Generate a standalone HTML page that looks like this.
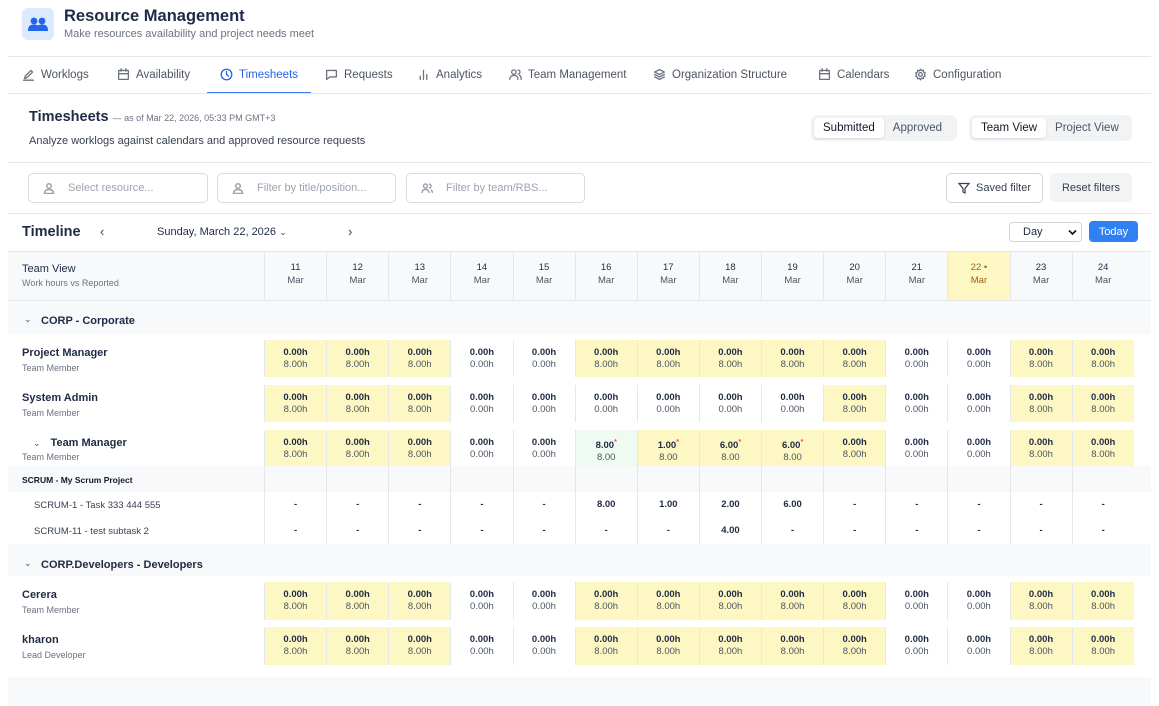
<!DOCTYPE html>
<html><head><meta charset="utf-8"><style>
*{box-sizing:border-box;margin:0;padding:0}
body{width:1159px;height:706px;overflow:hidden;background:#fff;font-family:"Liberation Sans","DejaVu Sans",sans-serif;color:#1f2a44;position:relative}
.a{position:absolute}
.hl{position:absolute;left:8px;width:1143px;height:1px;background:#e5e7eb}
.tab{position:absolute;top:68px;font-size:11.5px;color:#4b5563;display:flex;align-items:center;gap:6px;white-space:nowrap}
.tab svg{width:13px;height:13px;fill:none;stroke:#6b7280;stroke-width:1.6;stroke-linecap:round;stroke-linejoin:round}
.seg{position:absolute;top:115px;height:26px;background:#f1f3f5;border-radius:6px;display:flex;padding:3px;font-size:11.5px;color:#4b5563}
.seg span{padding:0 9px;line-height:20px}
.seg .on{background:#fff;color:#111827;border-radius:4px;box-shadow:0 1px 2px rgba(0,0,0,.12)}
.inp{position:absolute;top:173px;height:30px;border:1px solid #d8dce1;border-radius:5px;font-size:11px;color:#9ca3af;display:flex;align-items:center;padding-left:14px;gap:13px}
.inp svg{width:12px;height:12px;fill:none;stroke:#9ca3af;stroke-width:1.5}
.grid{position:absolute;left:8px;display:grid;grid-template-columns:256px repeat(14,62.14px)}
.grid>i{font-style:normal;text-align:center;font-size:9.5px;color:#4b5563;border-left:1px solid #e5e7eb;line-height:12.5px;padding-top:6.5px}
.grid>i b{display:block;color:#1f2a44;font-weight:bold}
.grid>i.y{background:#fdf7c3}
.grid>i.g{background:#effaf3}
.grid>i sup{color:#ef4444;font-size:7px}
.grid.t>i{padding-top:7px}
.grid.h>i{padding-top:10px}
.lab{padding-left:14px}
.lab .n{font-size:11px;font-weight:bold;color:#1f2a44;margin-top:7px}
.lab .s{font-size:9px;color:#6b7280;margin-top:4px}
.grp{position:absolute;left:8px;width:1143px;background:#f8f9fb}
</style></head><body>
<div class="a" style="left:22px;top:8px;width:32px;height:32px;background:#dbeafe;border-radius:6px"></div>
<svg class="a" style="left:28px;top:16px" width="20" height="16" viewBox="0 0 20 16"><circle cx="6" cy="5" r="3.4" fill="#2563eb"/><circle cx="14" cy="5" r="3.4" fill="#2563eb"/><path d="M0 15c0-5 2-6.5 6-6.5s6 1.5 6 6.5z M8 15c0-5 2-6.5 6-6.5s6 1.5 6 6.5z" fill="#2563eb"/></svg>
<div class="a" style="left:64px;top:7px;font-size:16.5px;font-weight:bold;color:#1e2a46">Resource Management</div>
<div class="a" style="left:64px;top:28px;font-size:11px;color:#6b7280">Make resources availability and project needs meet</div>
<div class="hl" style="top:56px"></div>
<div class="tab" style="left:22px"><svg viewBox="0 0 16 16"><path d="M3 13l1-3 7-7 2 2-7 7z M2 15h12"/></svg>Worklogs</div>
<div class="tab" style="left:117px"><svg viewBox="0 0 16 16"><rect x="2" y="3" width="12" height="11" rx="1"/><path d="M2 7h12M5 1v3M11 1v3"/></svg>Availability</div>
<div class="tab" style="left:220px;color:#2563eb"><svg viewBox="0 0 16 16" style="stroke:#2563eb"><circle cx="8" cy="8" r="6.5"/><path d="M8 4v4l2.5 2"/></svg>Timesheets</div>
<div class="a" style="left:207px;top:92px;width:104px;height:2px;background:#3b7cf0"></div>
<div class="tab" style="left:325px"><svg viewBox="0 0 16 16"><path d="M2 3h12v8H6l-4 3z"/></svg>Requests</div>
<div class="tab" style="left:417px"><svg viewBox="0 0 16 16"><path d="M4 14v-4M8 14V3M12 14V8"/></svg>Analytics</div>
<div class="tab" style="left:509px"><svg viewBox="0 0 16 16"><circle cx="6" cy="5" r="2.7"/><path d="M1 14c0-3 2-5 5-5s5 2 5 5M11 2.5a2.5 2.5 0 010 5M13 9c1.5 1 2 3 2 5"/></svg>Team Management</div>
<div class="tab" style="left:653px"><svg viewBox="0 0 16 16"><path d="M8 2l6 3-6 3-6-3z M2 8l6 3 6-3 M2 11l6 3 6-3"/></svg>Organization Structure</div>
<div class="tab" style="left:818px"><svg viewBox="0 0 16 16"><rect x="2" y="3" width="12" height="11" rx="1"/><path d="M2 7h12M5 1v3M11 1v3"/></svg>Calendars</div>
<div class="tab" style="left:914px"><svg viewBox="0 0 16 16"><circle cx="8" cy="8" r="2.3"/><path d="M8 1.5l1.3 1.8 2.2-.6.3 2.2 2 1-1 2 1 2-2 1-.3 2.2-2.2-.6L8 14.5l-1.3-1.8-2.2.6-.3-2.2-2-1 1-2-1-2 2-1 .3-2.2 2.2.6z"/></svg>Configuration</div>
<div class="hl" style="top:93px"></div>
<div class="a" style="left:29px;top:109px;font-size:14.5px;font-weight:bold;color:#1e2a46">Timesheets <span style="font-size:9px;font-weight:normal;color:#6b7280">— as of Mar 22, 2026, 05:33 PM GMT+3</span></div>
<div class="a" style="left:29px;top:135px;font-size:11px;color:#374151">Analyze worklogs against calendars and approved resource requests</div>
<div class="seg" style="left:811px;width:146px"><span class="on">Submitted</span><span>Approved</span></div>
<div class="seg" style="left:969px;width:163px"><span class="on">Team View</span><span>Project View</span></div>
<div class="hl" style="top:162px"></div>
<div class="inp" style="left:28px;width:180px"><svg viewBox="0 0 12 12"><circle cx="6" cy="4" r="2.3"/><path d="M1.5 11.5c0-3 2-4 4.5-4s4.5 1 4.5 4z"/></svg>Select resource...</div>
<div class="inp" style="left:217px;width:179px"><svg viewBox="0 0 12 12"><circle cx="6" cy="4" r="2.3"/><path d="M1.5 11.5c0-3 2-4 4.5-4s4.5 1 4.5 4z"/></svg>Filter by title/position...</div>
<div class="inp" style="left:406px;width:179px"><svg viewBox="0 0 12 12"><circle cx="4.5" cy="4" r="2"/><path d="M1 11c0-2.5 1.5-3.5 3.5-3.5S8 8.5 8 11M8 2a2 2 0 010 4M10 8c1 .7 1.5 1.8 1.5 3"/></svg>Filter by team/RBS...</div>
<div class="a" style="left:946px;top:173px;width:97px;height:30px;border:1px solid #d1d5db;border-radius:5px;font-size:11px;color:#374151;display:flex;align-items:center;justify-content:center;gap:6px"><svg width="12" height="12" viewBox="0 0 12 12" fill="none" stroke="#374151" stroke-width="1.2"><path d="M1 1.5h10L7 6.5V11L5 10V6.5z"/></svg>Saved filter</div>
<div class="a" style="left:1050px;top:173px;width:82px;height:29px;background:#f1f3f5;border-radius:5px;font-size:11px;color:#374151;display:flex;align-items:center;justify-content:center">Reset filters</div>
<div class="hl" style="top:213px"></div>
<div class="a" style="left:22px;top:224px;font-size:14.5px;font-weight:bold;color:#1e2a46">Timeline</div>
<div class="a" style="left:100px;top:224px;font-size:13px;color:#374151">‹</div>
<div class="a" style="left:157px;top:226px;font-size:11px;color:#1e2a46">Sunday, March 22, 2026 <span style="font-size:9px;color:#374151">⌄</span></div>
<div class="a" style="left:348px;top:224px;font-size:13px;color:#374151">›</div>
<div class="a" style="left:1009px;top:222px;width:73px;height:20px;border:1px solid #d1d5db;border-radius:4px;font-size:11px;color:#1f2937;padding:3px 0 0 13px">Day<svg class="a" style="right:4px;top:6px" width="9" height="7" viewBox="0 0 9 7"><path d="M1 1.5l3.5 3.5 3.5-3.5" fill="none" stroke="#111" stroke-width="1.6"/></svg></div>
<div class="a" style="left:1089px;top:221px;width:49px;height:21px;background:#2f80f5;border-radius:4px;color:#fff;font-size:11px;display:flex;align-items:center;justify-content:center">Today</div>

<div class="grp" style="top:251px;height:50px;border-top:1px solid #e5e7eb;border-bottom:1px solid #e5e7eb"></div>
<div class="grid h" style="top:252px;height:48px">
<div class="lab"><div class="n" style="font-weight:normal;color:#1e2a46;margin-top:11px">Team View</div><div class="s" style="margin-top:3px">Work hours vs Reported</div></div>
<i><b style="font-weight:normal">11</b>Mar</i><i><b style="font-weight:normal">12</b>Mar</i><i><b style="font-weight:normal">13</b>Mar</i><i><b style="font-weight:normal">14</b>Mar</i><i><b style="font-weight:normal">15</b>Mar</i><i><b style="font-weight:normal">16</b>Mar</i><i><b style="font-weight:normal">17</b>Mar</i><i><b style="font-weight:normal">18</b>Mar</i><i><b style="font-weight:normal">19</b>Mar</i><i><b style="font-weight:normal">20</b>Mar</i><i><b style="font-weight:normal">21</b>Mar</i><i class="y" style="color:#a16207"><b style="font-weight:normal;color:#a16207">22 •</b>Mar</i><i><b style="font-weight:normal">23</b>Mar</i><i><b style="font-weight:normal">24</b>Mar</i>
</div>

<div class="grp" style="top:301px;height:33px"></div>
<div class="a" style="left:24px;top:314px;font-size:9px;color:#4b5563">⌄</div>
<div class="a" style="left:41px;top:315px;font-size:11px;font-weight:bold;color:#1e2a46">CORP - Corporate</div>

<div class="grid" style="top:340px;height:37px">
<div class="lab"><div class="n">Project Manager</div><div class="s">Team Member</div></div>
<i class="y"><b>0.00h</b>8.00h</i><i class="y"><b>0.00h</b>8.00h</i><i class="y"><b>0.00h</b>8.00h</i><i><b>0.00h</b>0.00h</i><i><b>0.00h</b>0.00h</i><i class="y"><b>0.00h</b>8.00h</i><i class="y"><b>0.00h</b>8.00h</i><i class="y"><b>0.00h</b>8.00h</i><i class="y"><b>0.00h</b>8.00h</i><i class="y"><b>0.00h</b>8.00h</i><i><b>0.00h</b>0.00h</i><i><b>0.00h</b>0.00h</i><i class="y"><b>0.00h</b>8.00h</i><i class="y"><b>0.00h</b>8.00h</i>
</div>
<div class="grid" style="top:385px;height:37px">
<div class="lab"><div class="n">System Admin</div><div class="s">Team Member</div></div>
<i class="y"><b>0.00h</b>8.00h</i><i class="y"><b>0.00h</b>8.00h</i><i class="y"><b>0.00h</b>8.00h</i><i><b>0.00h</b>0.00h</i><i><b>0.00h</b>0.00h</i><i><b>0.00h</b>0.00h</i><i><b>0.00h</b>0.00h</i><i><b>0.00h</b>0.00h</i><i><b>0.00h</b>0.00h</i><i class="y"><b>0.00h</b>8.00h</i><i><b>0.00h</b>0.00h</i><i><b>0.00h</b>0.00h</i><i class="y"><b>0.00h</b>8.00h</i><i class="y"><b>0.00h</b>8.00h</i>
</div>
<div class="grid" style="top:430px;height:36px">
<div class="lab"><div class="n" style="font-weight:normal;padding-left:11px"><span style="font-size:9px;color:#4b5563;margin-right:10px">⌄</span><b>Team Manager</b></div><div class="s" style="margin-top:3px">Team Member</div></div>
<i class="y"><b>0.00h</b>8.00h</i><i class="y"><b>0.00h</b>8.00h</i><i class="y"><b>0.00h</b>8.00h</i><i><b>0.00h</b>0.00h</i><i><b>0.00h</b>0.00h</i><i class="g"><b>8.00<sup>*</sup></b>8.00</i><i class="y"><b>1.00<sup>*</sup></b>8.00</i><i class="y"><b>6.00<sup>*</sup></b>8.00</i><i class="y"><b>6.00<sup>*</sup></b>8.00</i><i class="y"><b>0.00h</b>8.00h</i><i><b>0.00h</b>0.00h</i><i><b>0.00h</b>0.00h</i><i class="y"><b>0.00h</b>8.00h</i><i class="y"><b>0.00h</b>8.00h</i>
</div>
<div class="grp" style="top:466px;height:26px"></div>
<div class="grid t" style="top:466px;height:78px;grid-template-rows:26px 26px 26px">
<div class="lab" style="font-size:8.5px;font-weight:bold;padding-top:9px;color:#111827">SCRUM - My Scrum Project</div>
<i></i><i></i><i></i><i></i><i></i><i></i><i></i><i></i><i></i><i></i><i></i><i></i><i></i><i></i>
<div class="lab" style="font-size:9.5px;color:#374151;padding:8px 0 0 26px">SCRUM-1 - Task 333 444 555</div>
<i><b>-</b></i><i><b>-</b></i><i><b>-</b></i><i><b>-</b></i><i><b>-</b></i><i><b>8.00</b></i><i><b>1.00</b></i><i><b>2.00</b></i><i><b>6.00</b></i><i><b>-</b></i><i><b>-</b></i><i><b>-</b></i><i><b>-</b></i><i><b>-</b></i>
<div class="lab" style="font-size:9.5px;color:#374151;padding:8px 0 0 26px">SCRUM-11 - test subtask 2</div>
<i><b>-</b></i><i><b>-</b></i><i><b>-</b></i><i><b>-</b></i><i><b>-</b></i><i><b>-</b></i><i><b>-</b></i><i><b>4.00</b></i><i><b>-</b></i><i><b>-</b></i><i><b>-</b></i><i><b>-</b></i><i><b>-</b></i><i><b>-</b></i>
</div>
<div class="grp" style="top:544px;height:32px"></div>
<div class="a" style="left:24px;top:558px;font-size:9px;color:#4b5563">⌄</div>
<div class="a" style="left:41px;top:559px;font-size:11px;font-weight:bold;color:#1e2a46">CORP.Developers - Developers</div>

<div class="grid" style="top:582px;height:38px">
<div class="lab"><div class="n">Cerera</div><div class="s">Team Member</div></div>
<i class="y"><b>0.00h</b>8.00h</i><i class="y"><b>0.00h</b>8.00h</i><i class="y"><b>0.00h</b>8.00h</i><i><b>0.00h</b>0.00h</i><i><b>0.00h</b>0.00h</i><i class="y"><b>0.00h</b>8.00h</i><i class="y"><b>0.00h</b>8.00h</i><i class="y"><b>0.00h</b>8.00h</i><i class="y"><b>0.00h</b>8.00h</i><i class="y"><b>0.00h</b>8.00h</i><i><b>0.00h</b>0.00h</i><i><b>0.00h</b>0.00h</i><i class="y"><b>0.00h</b>8.00h</i><i class="y"><b>0.00h</b>8.00h</i>
</div>
<div class="grid" style="top:627px;height:38px">
<div class="lab"><div class="n">kharon</div><div class="s">Lead Developer</div></div>
<i class="y"><b>0.00h</b>8.00h</i><i class="y"><b>0.00h</b>8.00h</i><i class="y"><b>0.00h</b>8.00h</i><i><b>0.00h</b>0.00h</i><i><b>0.00h</b>0.00h</i><i class="y"><b>0.00h</b>8.00h</i><i class="y"><b>0.00h</b>8.00h</i><i class="y"><b>0.00h</b>8.00h</i><i class="y"><b>0.00h</b>8.00h</i><i class="y"><b>0.00h</b>8.00h</i><i><b>0.00h</b>0.00h</i><i><b>0.00h</b>0.00h</i><i class="y"><b>0.00h</b>8.00h</i><i class="y"><b>0.00h</b>8.00h</i>
</div>
<div class="grp" style="top:677px;height:29px"></div>
</body></html>
